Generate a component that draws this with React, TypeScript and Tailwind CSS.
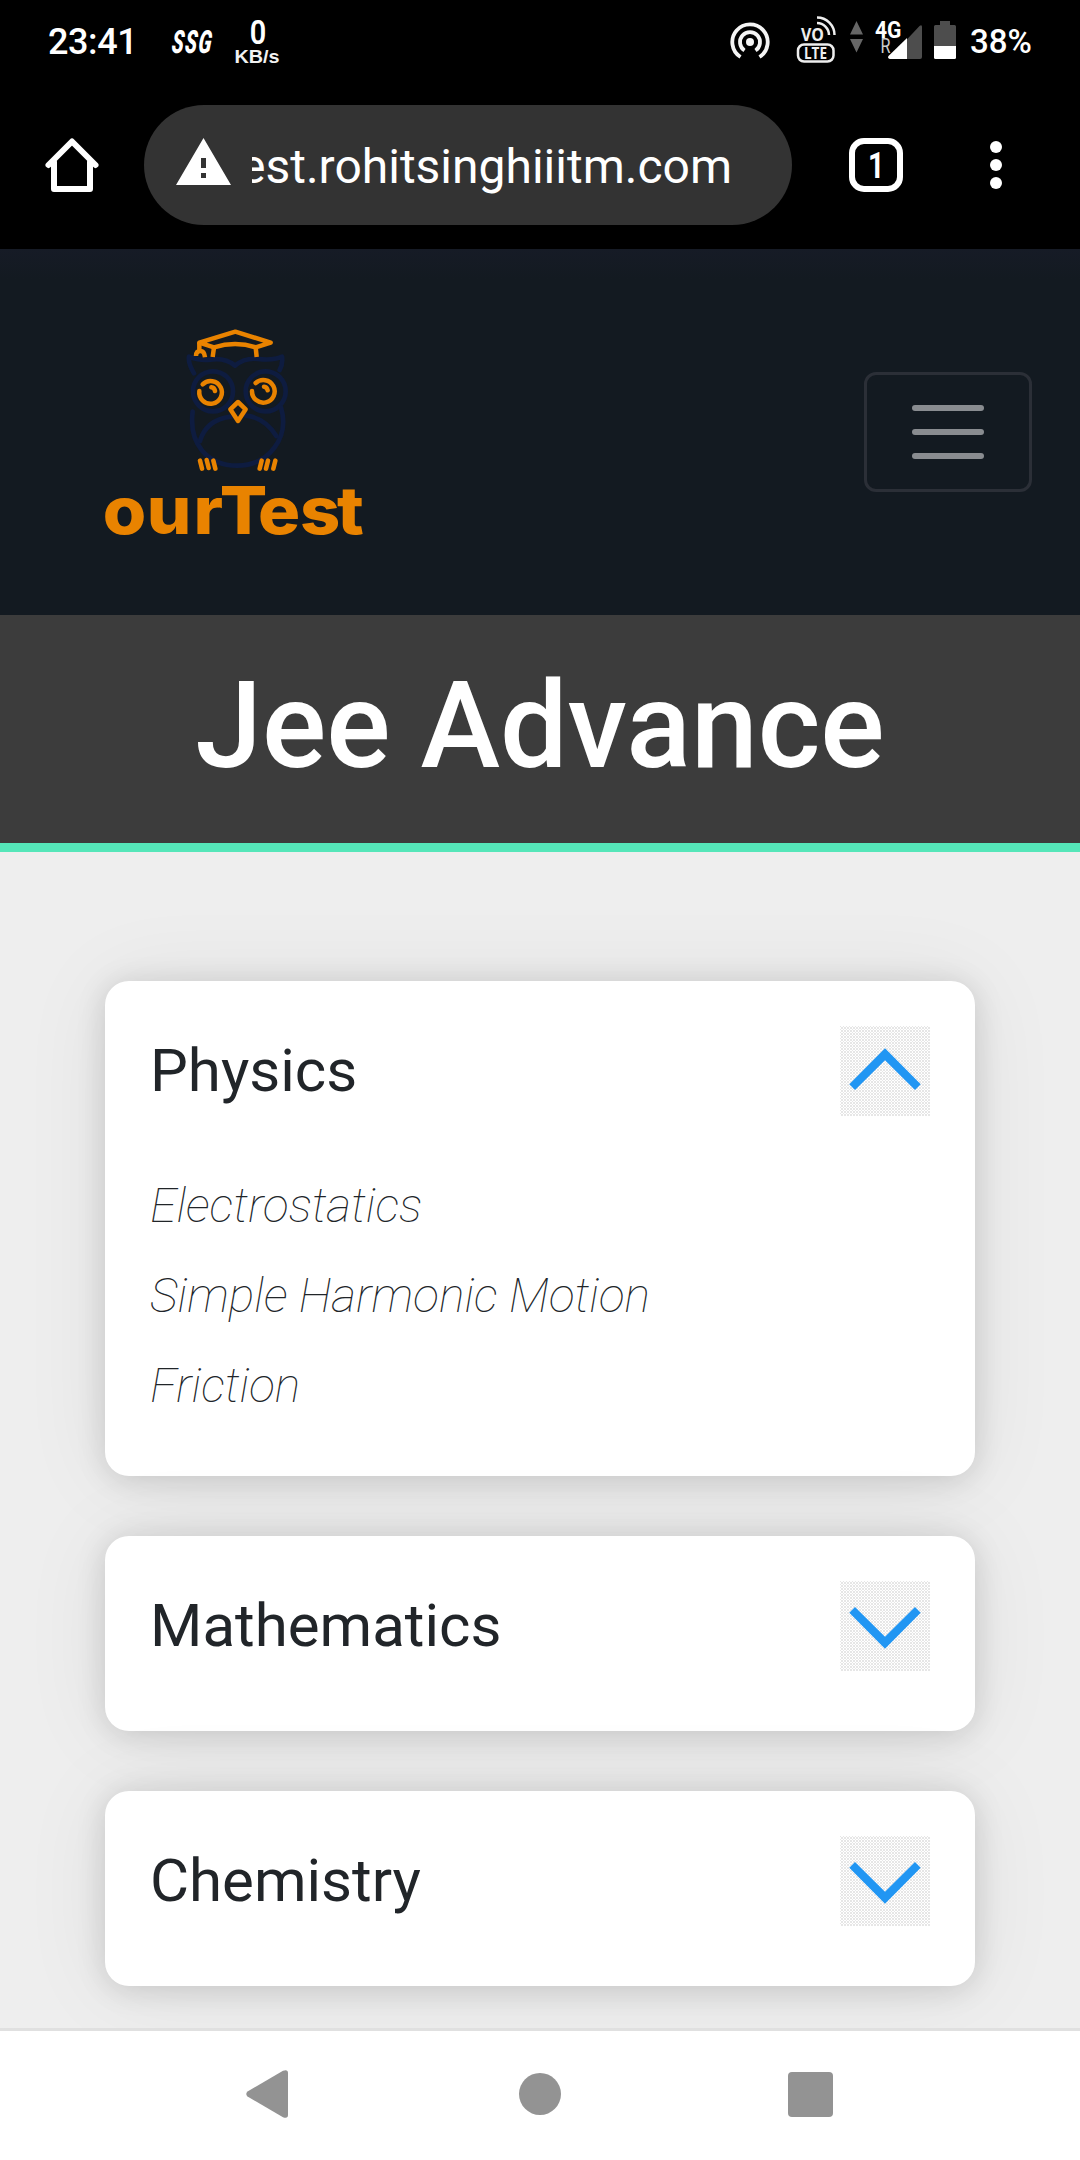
import React from "react";

function StatusBar() {
  return (
    <div className="flex h-[90px] items-start justify-between bg-black pl-12 pr-[47px] text-white">
      <div className="flex items-start">
        <span className="mt-[21px] w-[87px] whitespace-nowrap text-[36px] font-medium leading-[42px] tracking-[-0.4px]">23:41</span>
        <svg className="ml-[35px]" width="48" height="90" viewBox="170 0 48 90">
          <text x="0" y="0" transform="translate(171 53) skewX(-6) scale(.62 1)" fontSize="32" fontWeight="900" fontStyle="italic" fill="#fff" textLength="64" lengthAdjust="spacing">SSG</text>
        </svg>
        <svg className="ml-[15px]" width="50" height="90" viewBox="233 0 50 90">
          <text x="258" y="44" textAnchor="middle" fontSize="34" fontWeight="600" fill="#fff" transform="translate(258 0) scale(.85 1) translate(-258 0)">0</text>
          <text x="234.5" y="62.5" fontFamily="Liberation Sans, sans-serif" fontSize="19" fontWeight="700" fill="#f2f2f2" textLength="45" lengthAdjust="spacingAndGlyphs">KB/s</text>
        </svg>
      </div>
      <div className="flex items-start">
        <svg width="42" height="90" viewBox="729 0 42 90" fill="none" stroke="#f4f4f4" strokeWidth="3.8">
          <circle cx="750" cy="42" r="4" fill="#f4f4f4" stroke="none" />
          <path d="M744.5 50.5A10 10 0 1 1 755.5 50.5" />
          <path d="M740.5 57A17.7 17.7 0 1 1 759.5 57" />
        </svg>
        <svg className="ml-[24px]" width="43" height="90" viewBox="795 0 43 90">
          <text x="801" y="41" fontFamily="Open Sans, sans-serif" fontSize="18" fontWeight="700" fill="#eee" textLength="23" lengthAdjust="spacingAndGlyphs">VO</text>
          <g fill="none" stroke="#eee" strokeWidth="2.5">
            <path d="M817 17.5A17.5 17.5 0 0 1 834.5 35" />
            <path d="M817 23A12 12 0 0 1 829 35" />
            <rect x="798" y="44.5" width="35.5" height="17" rx="6" />
          </g>
          <text x="804" y="58.5" fontFamily="Open Sans, sans-serif" fontSize="15.5" fontWeight="700" fill="#eee" textLength="23" lengthAdjust="spacingAndGlyphs">LTE</text>
        </svg>
        <svg className="ml-[10px]" width="18" height="90" viewBox="848 0 18 90" fill="#666">
          <path d="M850 34.5L856.5 21L863 34.5ZM850 39L856.5 52.5L863 39Z" />
        </svg>
        <svg className="ml-[7px]" width="51" height="90" viewBox="873 0 51 90">
          <path d="M888.5 59L919.5 26Q922 24 922 27V57Q922 59 920 59Z" fill="#4d4d4d" />
          <path d="M890 59Q887 58 888.5 56L907 38V59Z" fill="#fff" />
          <text x="875" y="37.5" fontSize="24.5" fontWeight="700" fill="#fff" textLength="26.5" lengthAdjust="spacingAndGlyphs">4G</text>
          <text x="880.5" y="53" fontSize="19.5" fill="#ccc" textLength="10" lengthAdjust="spacingAndGlyphs">R</text>
        </svg>
        <svg className="ml-[9px]" width="24" height="90" viewBox="933 0 24 90">
          <path d="M940 21h10v4h4.5q1.5 0 1.5 1.5V46H934V26.5q0-1.5 1.5-1.5h4.5z" fill="#4d4d4d" />
          <path d="M934 46h22v11.5q0 1.5-1.5 1.5h-19q-1.5 0-1.5-1.5z" fill="#fff" />
        </svg>
        <svg className="ml-[12px]" width="64" height="90" viewBox="969 0 64 90">
          <text x="970" y="53" fontSize="34" fontWeight="500" fill="#fff" textLength="62" lengthAdjust="spacingAndGlyphs">38%</text>
        </svg>
      </div>
    </div>
  );
}

function BrowserBar() {
  return (
    <div className="flex h-[159px] items-start bg-black pt-[15px] text-white">
      <svg className="ml-[42px] mt-[30px]" width="60" height="60" viewBox="42 135 60 60" fill="none" stroke="#fff" strokeWidth="6" strokeLinecap="round" strokeLinejoin="round">
        <path d="M48.5 165L72 141.5L95.5 165" />
        <path d="M54 162V189H90V162" />
      </svg>
      <div className="ml-[42px] flex h-[120px] w-[648px] items-center rounded-full bg-[#333333] pl-8">
        <svg className="mb-[7px]" width="55" height="47" viewBox="0 0 55 47">
          <path fillRule="evenodd" fill="#fff" d="M27.5 0L55 47H0ZM25 20V30H30V20ZM25 35V40H30V35Z" />
        </svg>
        <div className="ml-[21px] flex w-[480px] justify-end overflow-hidden whitespace-nowrap pt-1 text-[48px] leading-[60px]">
          <span>ourtest.rohitsinghiiitm.com</span>
        </div>
      </div>
      <div className="ml-[57px] mt-[33px] flex h-[54px] w-[54px] items-center justify-center rounded-[15px] border-[6px] border-white pt-0.5 text-[36px] font-bold leading-none">
        <span className="scale-x-80">1</span>
      </div>
      <div className="ml-[87px] mt-[36px] flex flex-col gap-1.5">
        <span className="h-3 w-3 rounded-full bg-white" />
        <span className="h-3 w-3 rounded-full bg-white" />
        <span className="h-3 w-3 rounded-full bg-white" />
      </div>
    </div>
  );
}

function Logo() {
  return (
    <svg width="290" height="240" viewBox="0 0 870 720" fill="none" strokeLinecap="round" strokeLinejoin="round">
      <g stroke="#0e1c40" strokeWidth="14">
        <path d="M312 190Q294 160 297 140Q325 152 360 149Q405 142 435 167Q465 142 505 147Q550 152 576 140Q579 162 569 180" />
        <circle cx="369" cy="244" r="60" />
        <circle cx="527" cy="244" r="60" />
        <path d="M308 305C296 400 350 466 442 467C535 466 600 385 573 292" />
        <path d="M330 393Q348 330 422 320M468 317Q525 323 559 378" />
      </g>
      <g stroke="#e98300" strokeWidth="13.5">
        <path d="M328 98L436 65L542 98L497 112Q436 92 372 112Z" />
        <path d="M328 98V121M318 138Q318 123 331 123Q343 123 345 142M372 112L368 141M497 112L500 141" strokeLinecap="butt" />
        <path d="M338 223A34 34 0 1 1 328 243" />
        <path d="M497 219A34 34 0 1 1 486 243" />
        <path d="M364 232Q373 233 375 243M522 230Q531 231 533 241" />
        <path d="M444 276L467 298L444 333L421 298Z" />
        <path d="M330 452L336 476M350 450L356 474M370 452L376 476M515 452L509 476M534 452L528 476M556 452L550 476" />
      </g>
      <text transform="scale(1.07 1)" x="36 159 290 363.5 471 589 692.5" y="673" fontFamily="Inter, sans-serif" fontSize="197" fontWeight="800" fill="#e98300">ourTest</text>
    </svg>
  );
}

function SiteHeader() {
  return (
    <header className="flex h-[366px] items-start justify-between bg-[#131a21] bg-[linear-gradient(#161b26,#131a21_30px)] pl-[90px] pr-12 pt-[61px]">
      <Logo />
      <button className="mt-[62px] flex h-[120px] w-[168px] flex-col items-center justify-center gap-[18px] rounded-xl border-[3px] border-[#2b2f37]">
        <span className="h-1.5 w-[72px] rounded-full bg-[#898c90]" />
        <span className="h-1.5 w-[72px] rounded-full bg-[#898c90]" />
        <span className="h-1.5 w-[72px] rounded-full bg-[#898c90]" />
      </button>
    </header>
  );
}

function SubjectCard({ name, topics = [] }: { name: string; topics?: string[] }) {
  const open = topics.length > 0;
  return (
    <section className="rounded-3xl bg-white px-[45px] pt-[45px] pb-[60px] text-[#212529] shadow-[0_3px_30px_rgba(0,0,0,0.14),0_3px_90px_rgba(0,0,0,0.07)]">
      <div className="flex h-[90px] items-center justify-between">
        <h2 className="text-[60px] leading-[90px]">{name}</h2>
        <svg width="90" height="90" viewBox="0 0 90 90">
          <defs>
            <pattern id={"dots-" + name} width="3" height="3" patternUnits="userSpaceOnUse">
              <path d="M0 0h1v1H0zM1 1h2v2H1z" fill="#e6e6e6" />
            </pattern>
          </defs>
          <rect width="90" height="90" fill={"url(#dots-" + name + ")"} />
          <path
            fill="#2196f3"
            d={open ? "M45 22.3L80.700 58.200L75 63.900L45 34.200L15 63.900L9.300 58.200Z" : "M45 67.700L80.700 31.800L75 26.100L45 55.800L15 26.100L9.300 31.800Z"}
          />
        </svg>
      </div>
      {open && (
        <ul className="-mb-[15px] pt-[45px] text-[48px] font-thin italic leading-[90px]">
          {topics.map((t) => (
            <li key={t}>{t}</li>
          ))}
        </ul>
      )}
    </section>
  );
}

function NavigationBar() {
  return (
    <nav className="flex h-[132px] items-center justify-between border-t-[3px] border-[#e0e0e0] bg-white pb-[3px] pl-[246px] pr-[247px]">
      <svg width="42" height="48" viewBox="0 0 42 48" fill="#939393">
        <path d="M1.5 21.5L37 .8Q42-1 42 3V45Q42 49 37 47.2L1.5 26.5Q-1 24 1.5 21.5Z" />
      </svg>
      <span className="ml-[3px] h-[42px] w-[42px] rounded-full bg-[#939393]" />
      <span className="h-[45px] w-[45px] rounded-[4px] bg-[#939393]" />
    </nav>
  );
}

export default function App() {
  return (
    <div className="flex h-[2160px] w-[1080px] flex-col overflow-hidden bg-[#eeeeee] font-['Roboto',sans-serif]">
      <StatusBar />
      <BrowserBar />
      <SiteHeader />
      <div className="h-[237px] border-b-[9px] border-[#55e6b9] bg-[#3c3c3c] pt-[39px] text-center">
        <h1 className="text-[120px] font-medium leading-[144px] text-white">Jee Advance</h1>
      </div>
      <main className="flex h-[1176px] flex-col gap-[60px] overflow-hidden px-[105px] pt-[129px]">
        <SubjectCard name="Physics" topics={["Electrostatics", "Simple Harmonic Motion", "Friction"]} />
        <SubjectCard name="Mathematics" />
        <SubjectCard name="Chemistry" />
      </main>
      <NavigationBar />
    </div>
  );
}
